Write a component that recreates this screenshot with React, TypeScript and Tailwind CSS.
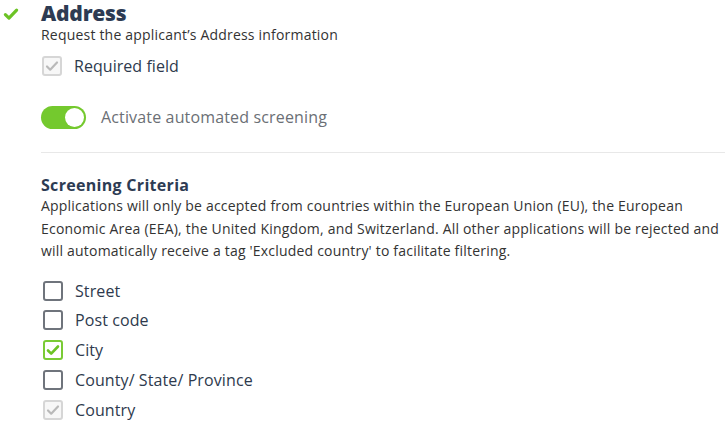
import React from "react";

const font = { fontFamily: "'Open Sans', Lato, sans-serif" };

const Check = ({ className, width = 2.2 }: { className: string; width?: number }) => (
  <svg viewBox="0 0 16 16" className={className} fill="none">
    <path
      d="M3 8.5l3.2 3.2L13 4.5"
      stroke="currentColor"
      strokeWidth={width}
      strokeLinecap="round"
      strokeLinejoin="round"
    />
  </svg>
);

type BoxState = "off" | "on" | "disabled";

const Box = ({ state }: { state: BoxState }) => {
  if (state === "on")
    return (
      <span className="w-[20px] h-[20px] rounded-[3px] border-2 border-[#7acb35] flex items-center justify-center bg-white">
        <Check className="w-[16px] h-[16px] text-[#6cc325]" width={2.6} />
      </span>
    );
  if (state === "disabled")
    return (
      <span className="w-[20px] h-[20px] rounded-[3px] border-2 border-[#d6d6d6] flex items-center justify-center bg-[#f7f7f7]">
        <Check className="w-[16px] h-[16px] text-[#b9b9b9]" />
      </span>
    );
  return (
    <span className="w-[20px] h-[20px] rounded-[3px] border-2 border-[#6f747c] bg-white" />
  );
};

const criteria: { label: string; state: BoxState }[] = [
  { label: "Street", state: "off" },
  { label: "Post code", state: "off" },
  { label: "City", state: "on" },
  { label: "County/ State/ Province", state: "off" },
  { label: "Country", state: "disabled" },
];

export default function App() {
  return (
    <div className="w-[725px] h-[438px] bg-white overflow-hidden flex" style={font}>
      <div className="w-[41px] shrink-0 pt-[5px] pl-[1px]">
        <Check className="w-[20px] h-[18px] text-[#6cc325]" width={2.8} />
      </div>
      <div className="flex-1 flex flex-col">
        <h2 className="text-[21px] leading-[27px] font-extrabold tracking-[-0.2px] text-[#2d3b53]">
          Address
        </h2>
        <p className="text-[14px] leading-[20px] tracking-[0.2px] text-[#333] -mt-[2px]">
          Request the applicant’s Address information
        </p>
        <label className="flex items-center gap-[12px] mt-[9px] ml-[1px]">
          <Box state="disabled" />
          <span className="text-[16px] tracking-[0.05px] text-[#2e3a4d]">Required field</span>
        </label>
        <div className="flex items-center gap-[15px] mt-[27px]">
          <span className="w-[45px] h-[23px] rounded-full bg-[#74c92e] flex items-center justify-end pr-[2px]">
            <span className="w-[19px] h-[19px] rounded-full bg-white" />
          </span>
          <span className="text-[16px] tracking-[0.15px] text-[#6b6f75]">
            Activate automated screening
          </span>
        </div>
        <div className="h-px bg-[#e8e8e8] mt-[23px]" />
        <h3 className="text-[16px] leading-[20px] tracking-[0.3px] font-bold text-[#2d3b53] mt-[22px]">
          Screening Criteria
        </h3>
        <p className="text-[14px] leading-[22.5px] tracking-[0.2px] text-[#333] pr-[2px]">
          Applications will only be accepted from countries within the European Union (EU), the European
          Economic Area (EEA), the United Kingdom, and Switzerland. All other applications will be rejected and
          will automatically receive a tag 'Excluded country' to facilitate filtering.
        </p>
        <ul className="flex flex-col gap-[9.75px] mt-[18px] ml-[2px]">
          {criteria.map((c) => (
            <li key={c.label} className="flex items-center gap-[12px]">
              <Box state={c.state} />
              <span className="text-[16px] leading-[20px] tracking-[0.1px] text-[#2e3a4d]">
                {c.label}
              </span>
            </li>
          ))}
        </ul>
      </div>
    </div>
  );
}
